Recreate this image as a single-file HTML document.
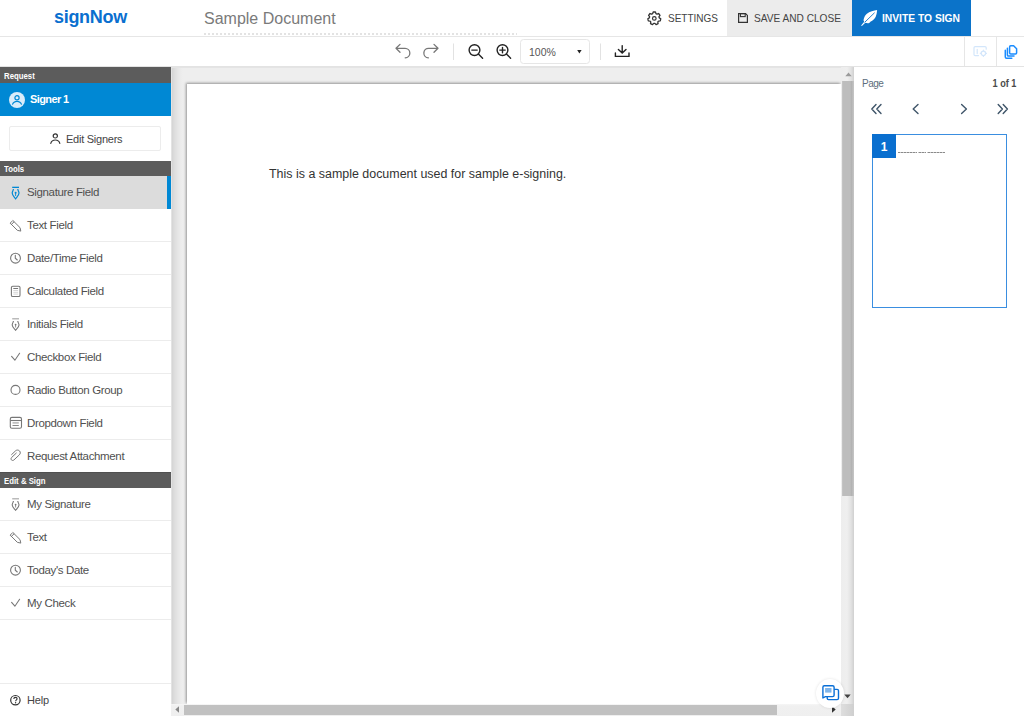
<!DOCTYPE html>
<html><head><meta charset="utf-8">
<style>
*{box-sizing:border-box;margin:0;padding:0}
html,body{width:1024px;height:716px;overflow:hidden;background:#fff;font-family:"Liberation Sans",sans-serif;color:#444}
.a{position:absolute}
svg{position:absolute;overflow:visible}
#hdr{position:absolute;left:0;top:0;width:1024px;height:37px;border-bottom:1px solid #e6e6e6;background:#fff}
#logo{position:absolute;left:54px;top:7px;font-size:18px;font-weight:bold;color:#0a6fcf;letter-spacing:-0.3px;line-height:20px}
#title{position:absolute;left:204px;top:10px;font-size:16px;color:#7a7a7a;line-height:18px}
#titleline{position:absolute;left:204px;top:33px;width:313px;height:2px;background:repeating-linear-gradient(90deg,#e3e3e3 0,#e3e3e3 2px,transparent 2px,transparent 4px)}
.btxt{position:absolute;top:11.5px;font-size:11.5px;line-height:13px;color:#444;white-space:nowrap;transform-origin:left center}
#tb{position:absolute;left:0;top:37px;width:1024px;height:30px;border-bottom:1px solid #e3e3e3;background:#fff}
.sh{position:absolute;left:0;width:171px;height:15px;background:#5c5c5c;color:#fff;font-size:9.5px;font-weight:bold;padding-left:4px;line-height:15px}
.sh span{display:inline-block;transform:scaleX(0.82);transform-origin:left center}
.row{position:absolute;left:0;width:171px;height:33px;border-bottom:1px solid #ececec;font-size:11.5px;color:#505050;letter-spacing:-0.35px}
.row .t{position:absolute;left:27px;top:10px;line-height:13px;white-space:nowrap}
.row svg{left:6px;top:6px}
#doc{position:absolute;left:171px;top:67px;width:683px;height:649px;background:#eeeeee;overflow:hidden}
#rp{position:absolute;left:854px;top:67px;width:170px;height:649px;background:#fff}
</style></head><body>
<!-- HEADER -->
<div id="hdr">
  <div id="logo">signNow</div>
  <div id="title">Sample Document</div>
  <div id="titleline"></div>
  <!-- settings -->
  <svg style="left:647px;top:11px" width="15" height="15" viewBox="0 0 15 15"><path fill="none" stroke="#333" stroke-width="1.3" stroke-linejoin="round" d="M5.67,2.67 L6.17,1.00 L8.43,1.00 L8.93,2.67 L9.98,3.18 L11.60,2.53 L13.01,4.29 L12.01,5.73 L12.27,6.86 L13.79,7.72 L13.29,9.92 L11.55,10.04 L10.82,10.95 L11.09,12.68 L9.06,13.66 L7.88,12.37 L6.72,12.37 L5.54,13.66 L3.51,12.68 L3.78,10.95 L3.05,10.04 L1.31,9.92 L0.81,7.72 L2.33,6.86 L2.59,5.73 L1.59,4.29 L3.00,2.53 L4.62,3.18 Z"/><circle cx="7.3" cy="7.4" r="1.8" fill="none" stroke="#333" stroke-width="1.2"/></svg>
  <div class="btxt" style="left:668px;transform:scaleX(0.87)">SETTINGS</div>
  <div class="a" style="left:727px;top:0;width:125px;height:36px;background:#ececec"></div>
  <svg style="left:738px;top:13px" width="10" height="10" viewBox="0 0 10 10"><path fill="none" stroke="#333" stroke-width="1.2" d="M0.6,0.6 H7.6 L9.4,2.4 V9.4 H0.6 Z"/><rect x="2.4" y="0.6" width="4.8" height="3" fill="none" stroke="#333" stroke-width="1.1"/></svg>
  <div class="btxt" style="left:754px;transform:scaleX(0.88)">SAVE AND CLOSE</div>
  <div class="a" style="left:852px;top:0;width:119px;height:36px;background:#0b73c9"></div>
  <svg style="left:861px;top:10px" width="17" height="17" viewBox="0 0 17 17"><path fill="#fff" d="M16.1,0 C13,0.6 8.5,1.5 5.9,3.8 C4,5.5 3,7.5 2.5,10.2 L3.2,11.8 L0.1,15.5 L0.9,16.1 L4.3,12.7 C5.6,13.2 7,13.3 8.1,13 C9.1,12.6 9.6,11.6 9.6,11.6 C11.2,11.1 13.1,9.4 14.6,6.9 C15.5,5 16,2.5 16.1,0 Z"/><path d="M13.6,2.7 L3.6,12.4" stroke="#0b73c9" stroke-width="0.9"/></svg>
  <div class="btxt" style="left:882px;color:#fff;font-weight:bold;transform:scaleX(0.893)">INVITE TO SIGN</div>
</div>
<!-- TOOLBAR -->
<div id="tb">
  <svg style="left:0;top:0" width="1024" height="30" viewBox="0 37 1024 30">
    <g fill="none" stroke="#777" stroke-width="1.3" stroke-linecap="round" stroke-linejoin="round">
      <path d="M400,44.4 L396,48.3 L400,52.2 M396,48.3 H405 A4.6,4.6 0 0 1 405.2,57.8"/>
      <path d="M434,44.4 L438,48.3 L434,52.2 M438,48.3 H428.8 A4.6,4.6 0 0 0 428.4,57.8"/>
    </g>
    <rect x="453" y="43.5" width="1" height="16.5" fill="#e2e2e2"/>
    <rect x="600" y="43.5" width="1" height="16.5" fill="#e2e2e2"/>
    <g fill="none" stroke="#222" stroke-width="1.4" stroke-linecap="round">
      <circle cx="474.5" cy="50.1" r="5.4"/><path d="M478.4,54 L482.6,58.2 M471.8,50.1 H477.2"/>
      <circle cx="502.5" cy="50.1" r="5.4"/><path d="M506.4,54 L510.6,58.2 M499.8,50.1 H505.2 M502.5,47.4 V52.8"/>
      <path d="M622.2,45.6 V53 M618.4,49.4 L622.2,53.1 L626,49.4 M615.4,52.9 V56.4 H629 V52.9"/>
    </g>
    <rect x="520.5" y="39.5" width="69" height="24" rx="3" fill="#fff" stroke="#e6e6e6"/>
    <path d="M577.2,50 H581.6 L579.4,53.6 Z" fill="#222"/>
    <rect x="964" y="37" width="1" height="29" fill="#e6e6e6"/>
    <rect x="996" y="37" width="1" height="29" fill="#e6e6e6"/>
    <g fill="none" stroke="#d3e6fb" stroke-width="1.2" stroke-linecap="round">
      <path d="M978.5,55.6 H975.2 Q974,55.6 974,54.4 V47.8 Q974,46.6 975.2,46.6 H985 Q986.2,46.6 986.2,47.8 V49.2"/><circle cx="983.4" cy="53.3" r="2.2"/><path d="M977.2,49.3 V53.6 M983.4,50.2 V50.6 M983.4,56 V56.4 M980.3,53.3 H980.7 M986.1,53.3 H986.5"/>
    </g>
    <g fill="none" stroke="#1a8cff" stroke-width="1.5" stroke-linejoin="round" stroke-linecap="round">
      <path d="M1005.3,50.2 V57 Q1005.3,58.2 1006.5,58.2 H1011.8"/>
      <path d="M1007.4,48.2 V55 Q1007.4,56.1 1008.5,56.1 H1014"/>
      <path d="M1010.7,45.8 H1013.6 L1016.6,48.8 V52.8 Q1016.6,53.9 1015.5,53.9 H1010.7 Q1009.6,53.9 1009.6,52.8 V46.9 Q1009.6,45.8 1010.7,45.8 Z" fill="#fff"/>
    </g>
  </svg>
  <div class="a" style="left:529px;top:9px;font-size:10.5px;line-height:12px;color:#555">100%</div>
</div>
<!-- SIDEBAR -->
<div class="a" style="left:0;top:67px;width:171px;height:649px;background:#fff">
  <div class="sh" style="top:0;height:16px;line-height:18px"><span>Request</span></div>
  <div class="a" style="left:0;top:16px;width:171px;height:33px;background:#0088d4"></div>
  <svg style="left:9px;top:24.5px" width="16" height="16" viewBox="0 0 16 16"><circle cx="8" cy="8" r="8" fill="#d9ecfa"/><g fill="none" stroke="#0088d4" stroke-width="1.2"><circle cx="8" cy="5.8" r="2.1"/><path d="M3.4,12.6 C4.2,10.5 6,9.4 8,9.4 C10,9.4 11.8,10.5 12.6,12.6"/></g></svg>
  <div class="a" style="left:30px;top:26px;font-size:11px;line-height:13px;font-weight:bold;color:#fff;letter-spacing:-0.6px">Signer 1</div>
  <div class="a" style="left:9px;top:59px;width:152px;height:25px;border:1px solid #ececec;border-radius:2px"></div>
  <svg style="left:50px;top:66px" width="11" height="11" viewBox="0 0 11 11"><g fill="none" stroke="#333" stroke-width="1.2" stroke-linecap="round"><circle cx="5.3" cy="2.9" r="2.1"/><path d="M0.8,10.3 C1.5,7.9 3.3,7 5.3,7 C7.3,7 9.1,7.9 9.8,10.3"/></g></svg>
  <div class="a" style="left:66px;top:65.5px;font-size:11px;line-height:13px;color:#444;letter-spacing:-0.25px">Edit Signers</div>
  <div class="sh" style="top:94px"><span>Tools</span></div>
  <div class="row" style="top:109px;background:#dcdcdc;border-bottom:none"><span class="t">Signature Field</span>
    <svg width="20" height="20" viewBox="0 0 20 20"><rect x="6.2" y="4.7" width="6.8" height="1.3" fill="#0088d4"/><path fill="none" stroke="#0088d4" stroke-width="1.2" d="M7.4,6.9 C7.4,8.4 6.2,9.4 6.2,11 C6.2,13 8,14.6 9.6,16.8 C11.2,14.6 13,13 13,11 C13,9.4 11.8,8.4 11.8,6.9"/><circle cx="9.6" cy="10.8" r="1" fill="#0088d4"/><path d="M9.6,11 V14" stroke="#0088d4" stroke-width="0.9"/></svg>
    <div class="a" style="left:167px;top:0;width:4px;height:33px;background:#0088d4"></div></div>
  <div class="row" style="top:142px"><span class="t">Text Field</span>
    <svg width="20" height="20" viewBox="0 0 20 20"><g fill="none" stroke="#777" stroke-width="1" stroke-linejoin="round"><path d="M6.84,5.46 L14.02,12.64 L14.8,16.1 L11.34,15.32 L4.16,8.14 Z"/><path d="M8.11,6.73 L5.43,9.41"/></g></svg></div>
  <div class="row" style="top:175px"><span class="t">Date/Time Field</span>
    <svg width="20" height="20" viewBox="0 0 20 20"><g fill="none" stroke="#777" stroke-width="1.1" stroke-linecap="round"><circle cx="9.5" cy="10.2" r="4.9"/><path d="M9.3,7.4 V10.2 L11.3,12"/></g></svg></div>
  <div class="row" style="top:208px"><span class="t">Calculated Field</span>
    <svg width="20" height="20" viewBox="0 0 20 20"><rect x="5.4" y="5.3" width="8.6" height="10.2" rx="1.3" fill="none" stroke="#777" stroke-width="1.1"/><path d="M7.3,7.5 H12.1" stroke="#777" stroke-width="1"/><path d="M7.3,9.5 H12.1 M7.3,11.3 H12.1 M7.3,13.1 H12.1" stroke="#ccc" stroke-width="0.8"/></svg></div>
  <div class="row" style="top:241px"><span class="t">Initials Field</span>
    <svg width="20" height="20" viewBox="0 0 20 20"><rect x="6.2" y="4.2" width="6.8" height="1.2" fill="#aaa"/><path fill="none" stroke="#777" stroke-width="1.1" d="M7.4,6.9 C7.4,8.4 6.2,9.4 6.2,11 C6.2,13 8,14.6 9.6,16.3 C11.2,14.6 13,13 13,11 C13,9.4 11.8,8.4 11.8,6.9"/><circle cx="9.6" cy="10.6" r="0.9" fill="#777"/><path d="M9.6,11 V13.5" stroke="#777" stroke-width="0.8"/></svg></div>
  <div class="row" style="top:274px"><span class="t">Checkbox Field</span>
    <svg width="20" height="20" viewBox="0 0 20 20"><path fill="none" stroke="#777" stroke-width="1.1" stroke-linecap="round" d="M5.6,9.4 L8.9,13.2 L13.6,6.3"/></svg></div>
  <div class="row" style="top:307px"><span class="t">Radio Button Group</span>
    <svg width="20" height="20" viewBox="0 0 20 20"><circle cx="9.5" cy="9.9" r="4.5" fill="none" stroke="#777" stroke-width="1.1"/></svg></div>
  <div class="row" style="top:340px"><span class="t">Dropdown Field</span>
    <svg width="20" height="20" viewBox="0 0 20 20"><g fill="none" stroke="#777" stroke-width="1.1"><rect x="4.3" y="4.4" width="11.2" height="10.9" rx="1.6"/><path d="M4.3,7.5 H15.5"/></g><path d="M6.5,9.9 H12.8" stroke="#aaa" stroke-width="1.3"/><path d="M6.5,12.5 H12.8" stroke="#888" stroke-width="1"/></svg></div>
  <div class="row" style="top:373px"><span class="t">Request Attachment</span>
    <svg width="20" height="20" viewBox="0 0 20 20"><path fill="none" stroke="#777" stroke-width="1" stroke-linecap="round" d="M5.6,8.6 L9.6,4.8 C10.8,3.7 12.6,3.9 13.6,5 C14.6,6.1 14.5,7.8 13.3,8.9 L8,13.9 C7.2,14.7 6,14.6 5.4,13.9 C4.8,13.2 4.9,12.1 5.7,11.4 L10.3,7.1"/></svg></div>
  <div class="sh" style="top:405px;height:16px;line-height:15.5px;border-top:1px solid #505050"><span>Edit &amp; Sign</span></div>
  <div class="row" style="top:421px"><span class="t">My Signature</span>
    <svg width="20" height="20" viewBox="0 0 20 20"><rect x="6.2" y="4.2" width="6.8" height="1.2" fill="#aaa"/><path fill="none" stroke="#777" stroke-width="1.1" d="M7.4,6.9 C7.4,8.4 6.2,9.4 6.2,11 C6.2,13 8,14.6 9.6,16.3 C11.2,14.6 13,13 13,11 C13,9.4 11.8,8.4 11.8,6.9"/><circle cx="9.6" cy="10.6" r="0.9" fill="#777"/><path d="M9.6,11 V13.5" stroke="#777" stroke-width="0.8"/></svg></div>
  <div class="row" style="top:454px"><span class="t">Text</span>
    <svg width="20" height="20" viewBox="0 0 20 20"><g fill="none" stroke="#777" stroke-width="1" stroke-linejoin="round"><path d="M6.84,5.46 L14.02,12.64 L14.8,16.1 L11.34,15.32 L4.16,8.14 Z"/><path d="M8.11,6.73 L5.43,9.41"/></g></svg></div>
  <div class="row" style="top:487px"><span class="t">Today's Date</span>
    <svg width="20" height="20" viewBox="0 0 20 20"><g fill="none" stroke="#777" stroke-width="1.1" stroke-linecap="round"><circle cx="9.5" cy="10.2" r="4.9"/><path d="M9.3,7.4 V10.2 L11.3,12"/></g></svg></div>
  <div class="row" style="top:520px"><span class="t">My Check</span>
    <svg width="20" height="20" viewBox="0 0 20 20"><path fill="none" stroke="#777" stroke-width="1.1" stroke-linecap="round" d="M5.6,9.4 L8.9,13.2 L13.6,6.3"/></svg></div>
  <div class="a" style="left:0;top:616px;width:171px;height:1px;background:#ececec"></div>
  <svg style="left:4px;top:621px" width="24" height="24" viewBox="0 0 24 24"><circle cx="11.4" cy="12.2" r="4.7" fill="none" stroke="#333" stroke-width="1.2"/><path d="M9.8,11 C9.8,9.9 10.6,9.4 11.5,9.4 C12.4,9.4 13.1,10 13.1,10.8 C13.1,11.8 11.6,12 11.6,13.3" fill="none" stroke="#333" stroke-width="1.1"/><circle cx="11.6" cy="14.8" r="0.7" fill="#333"/></svg>
  <div class="a" style="left:27px;top:627px;font-size:11px;line-height:13px;color:#444;letter-spacing:-0.2px">Help</div>
</div>
<!-- DOC -->
<div id="doc">
  <div class="a" style="left:0;top:0;width:682px;height:649px;background:linear-gradient(90deg,#f2f2f2 0px,#d4d4d4 1px,#dcdcdc 3px,#e6e6e6 7px,#ececec 10px,#eeeeee 12px)"></div>
  <div class="a" style="left:0;top:0;width:682px;height:1px;background:#e4e4e4"></div>
  <div class="a" style="left:16px;top:17px;width:654px;height:620px;background:#fff;box-shadow:-1px -1.3px 2.5px rgba(0,0,0,.38)"></div>
  <div class="a" style="left:98px;top:100px;font-size:12.45px;line-height:14px;color:#333;white-space:nowrap">This is a sample document used for sample e-signing.</div>
  <!-- vertical scrollbar -->
  <div class="a" style="left:670px;top:0;width:13px;height:637px;background:linear-gradient(90deg,#ededed 0px,#efefef 6px,#e2e2e2 10px,#d0d0d0 13px)"></div>
  <svg style="left:673.5px;top:5px" width="7" height="5" viewBox="0 0 7 5"><path d="M0.3,4.2 L3.5,0.6 L6.7,4.2 Z" fill="#9a9a9a"/></svg>
  <div class="a" style="left:671px;top:14px;width:12px;height:415px;background:linear-gradient(90deg,#c6c6c6 0px,#bdbdbd 1.5px,#bdbdbd 8px,#b3b3b3 9.5px,#c6c6c6 12px)"></div>
  <!-- horizontal scrollbar -->
  <div class="a" style="left:0;top:637px;width:670px;height:12px;background:linear-gradient(180deg,#f6f6f6 0px,#f0f0f0 2px,#efefef 13px)"></div>
  <div class="a" style="left:13px;top:638px;width:593px;height:10px;background:#c1c1c1"></div>
  <svg style="left:3px;top:639px" width="6" height="7" viewBox="0 0 6 7"><path d="M5,0.3 L1.3,3.5 L5,6.7 Z" fill="#888"/></svg>
  <svg style="left:660px;top:639px" width="6" height="7" viewBox="0 0 6 7"><path d="M1,0.3 L4.7,3.5 L1,6.7 Z" fill="#333"/></svg>
  <div class="a" style="left:670px;top:637px;width:13px;height:12px;background:linear-gradient(90deg,#dedede,#cfcfcf)"></div>
  <svg style="left:673px;top:627px" width="7" height="5" viewBox="0 0 7 5"><path d="M0.3,0.6 L3.5,4.2 L6.7,0.6 Z" fill="#444"/></svg>
  <!-- chat button -->
  <div class="a" style="left:645px;top:612px;width:28px;height:29px;border-radius:50%;background:#fff;box-shadow:0 0 3px rgba(0,0,0,.12)"></div>
  <svg style="left:651px;top:618px" width="17" height="16" viewBox="0 0 17 16">
    <rect x="5.2" y="4.4" width="11.3" height="10.2" rx="1.4" fill="#fff" stroke="#0a6fd6" stroke-width="1.4"/>
    <path d="M2.3,0.8 H10.6 C11.5,0.8 12.1,1.4 12.1,2.3 V10.2 C12.1,11.1 11.5,11.6 10.6,11.6 H3.4 L0.9,13 V2.3 C0.9,1.4 1.5,0.8 2.3,0.8 Z" fill="#fff" stroke="#0a6fd6" stroke-width="1.4" stroke-linejoin="round"/>
    <rect x="3.1" y="3" width="6.4" height="4.6" fill="#7fb5ea"/>
  </svg>
</div>
<!-- RIGHT PANEL -->
<div id="rp">
  <div class="a" style="left:8px;top:11px;font-size:10px;line-height:12px;color:#5d6d7c;letter-spacing:-0.5px">Page</div>
  <div class="a" style="right:7.5px;top:9.7px;font-size:10.5px;line-height:12px;font-weight:bold;color:#4a4a4a;white-space:nowrap;transform:scaleX(0.87);transform-origin:right center">1 of 1</div>
  <svg style="left:-1px;top:0" width="171" height="60" viewBox="853 67 171 60"><g fill="none" stroke="#3f5569" stroke-width="1.4" stroke-linecap="round" stroke-linejoin="round">
    <path d="M876,104.6 L871.8,109.1 L876,113.6 M881,104.6 L876.8,109.1 L881,113.6"/>
    <path d="M918,104.6 L913.2,109.1 L918,113.6"/>
    <path d="M961.6,104.6 L966.4,109.1 L961.6,113.6"/>
    <path d="M998.2,104.6 L1002.4,109.1 L998.2,113.6 M1003.2,104.6 L1007.4,109.1 L1003.2,113.6"/>
  </g></svg>
  <div class="a" style="left:18px;top:67px;width:135px;height:174px;border:1px solid #3a8ee0"></div>
  <div class="a" style="left:18px;top:67px;width:24px;height:24px;background:#0a6fcf;color:#fff;font-size:12px;font-weight:bold;text-align:center;line-height:27px">1</div>
  <div class="a" style="left:44px;top:85px;width:47px;height:1px;background:repeating-linear-gradient(90deg,#8a8a8a 0,#8a8a8a 2px,#c4c4c4 2px,#c4c4c4 3px)"></div>
  <div class="a" style="left:62.5px;top:85px;width:1.5px;height:1px;background:#fff"></div>
  <div class="a" style="left:71.5px;top:85px;width:1.5px;height:1px;background:#fff"></div>
</div>
</body></html>
